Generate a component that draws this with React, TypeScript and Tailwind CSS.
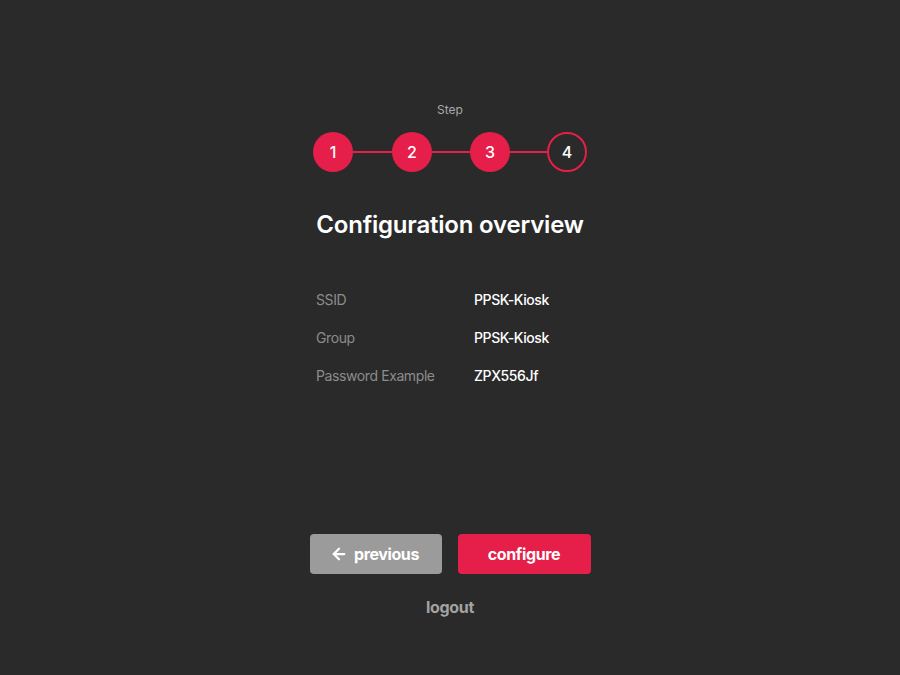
import React from "react";
import { ArrowLeft } from "lucide-react";

const font = { fontFamily: "Inter, 'Liberation Sans', sans-serif" };

export default function App() {
  const rows = [
    ["SSID", "PPSK-Kiosk"],
    ["Group", "PPSK-Kiosk"],
    ["Password Example", "ZPX556Jf"],
  ];
  const lines = ["w-[39px]", "w-[38px]", "w-[37px]"];
  return (
    <div className="w-[900px] h-[675px] bg-[#2a2a2a] flex flex-col items-center pt-[102px]" style={font}>
      <div className="text-[12px] leading-4 text-[#a8a8a8]">Step</div>
      <div className="mt-[14px] flex items-center">
        {[1, 2, 3].map((n, i) => (
          <React.Fragment key={n}>
            <div className="w-10 h-10 rounded-full bg-[#e61e4a] flex items-center justify-center text-white text-[16px] font-medium">
              {n}
            </div>
            <div className={`${lines[i]} h-[2px] bg-[#e61e4a]`} />
          </React.Fragment>
        ))}
        <div className="w-10 h-10 rounded-full border-2 border-[#e61e4a] flex items-center justify-center text-white text-[16px] font-medium">
          4
        </div>
      </div>
      <h1 className="mt-[37px] text-[24px] leading-8 font-semibold text-white tracking-[-0.2px]">Configuration overview</h1>
      <div className="mt-[39px] w-[268px] flex flex-col">
        {rows.map(([k, v]) => (
          <div key={k} className="h-[38px] flex items-center text-[14px] tracking-[-0.4px]">
            <div className="w-[158px] text-[#8c8c8c]">{k}</div>
            <div className="text-white font-medium">{v}</div>
          </div>
        ))}
      </div>
      <div className="mt-[140px] flex gap-4">
        <button className="w-[132px] h-10 rounded bg-[#9b9b9b] text-white font-bold text-[16px] tracking-[-0.4px] flex items-center justify-center gap-[6px] pr-[2px]">
          <ArrowLeft size={18} strokeWidth={3} />
          previous
        </button>
        <button className="w-[133px] h-10 rounded bg-[#e61e4a] text-white font-bold text-[16px] tracking-[-0.35px] flex items-center justify-center">
          configure
        </button>
      </div>
      <div className="mt-[21px] text-[16px] leading-6 font-bold text-[#a3a3a3] tracking-[-0.3px]">logout</div>
    </div>
  );
}
